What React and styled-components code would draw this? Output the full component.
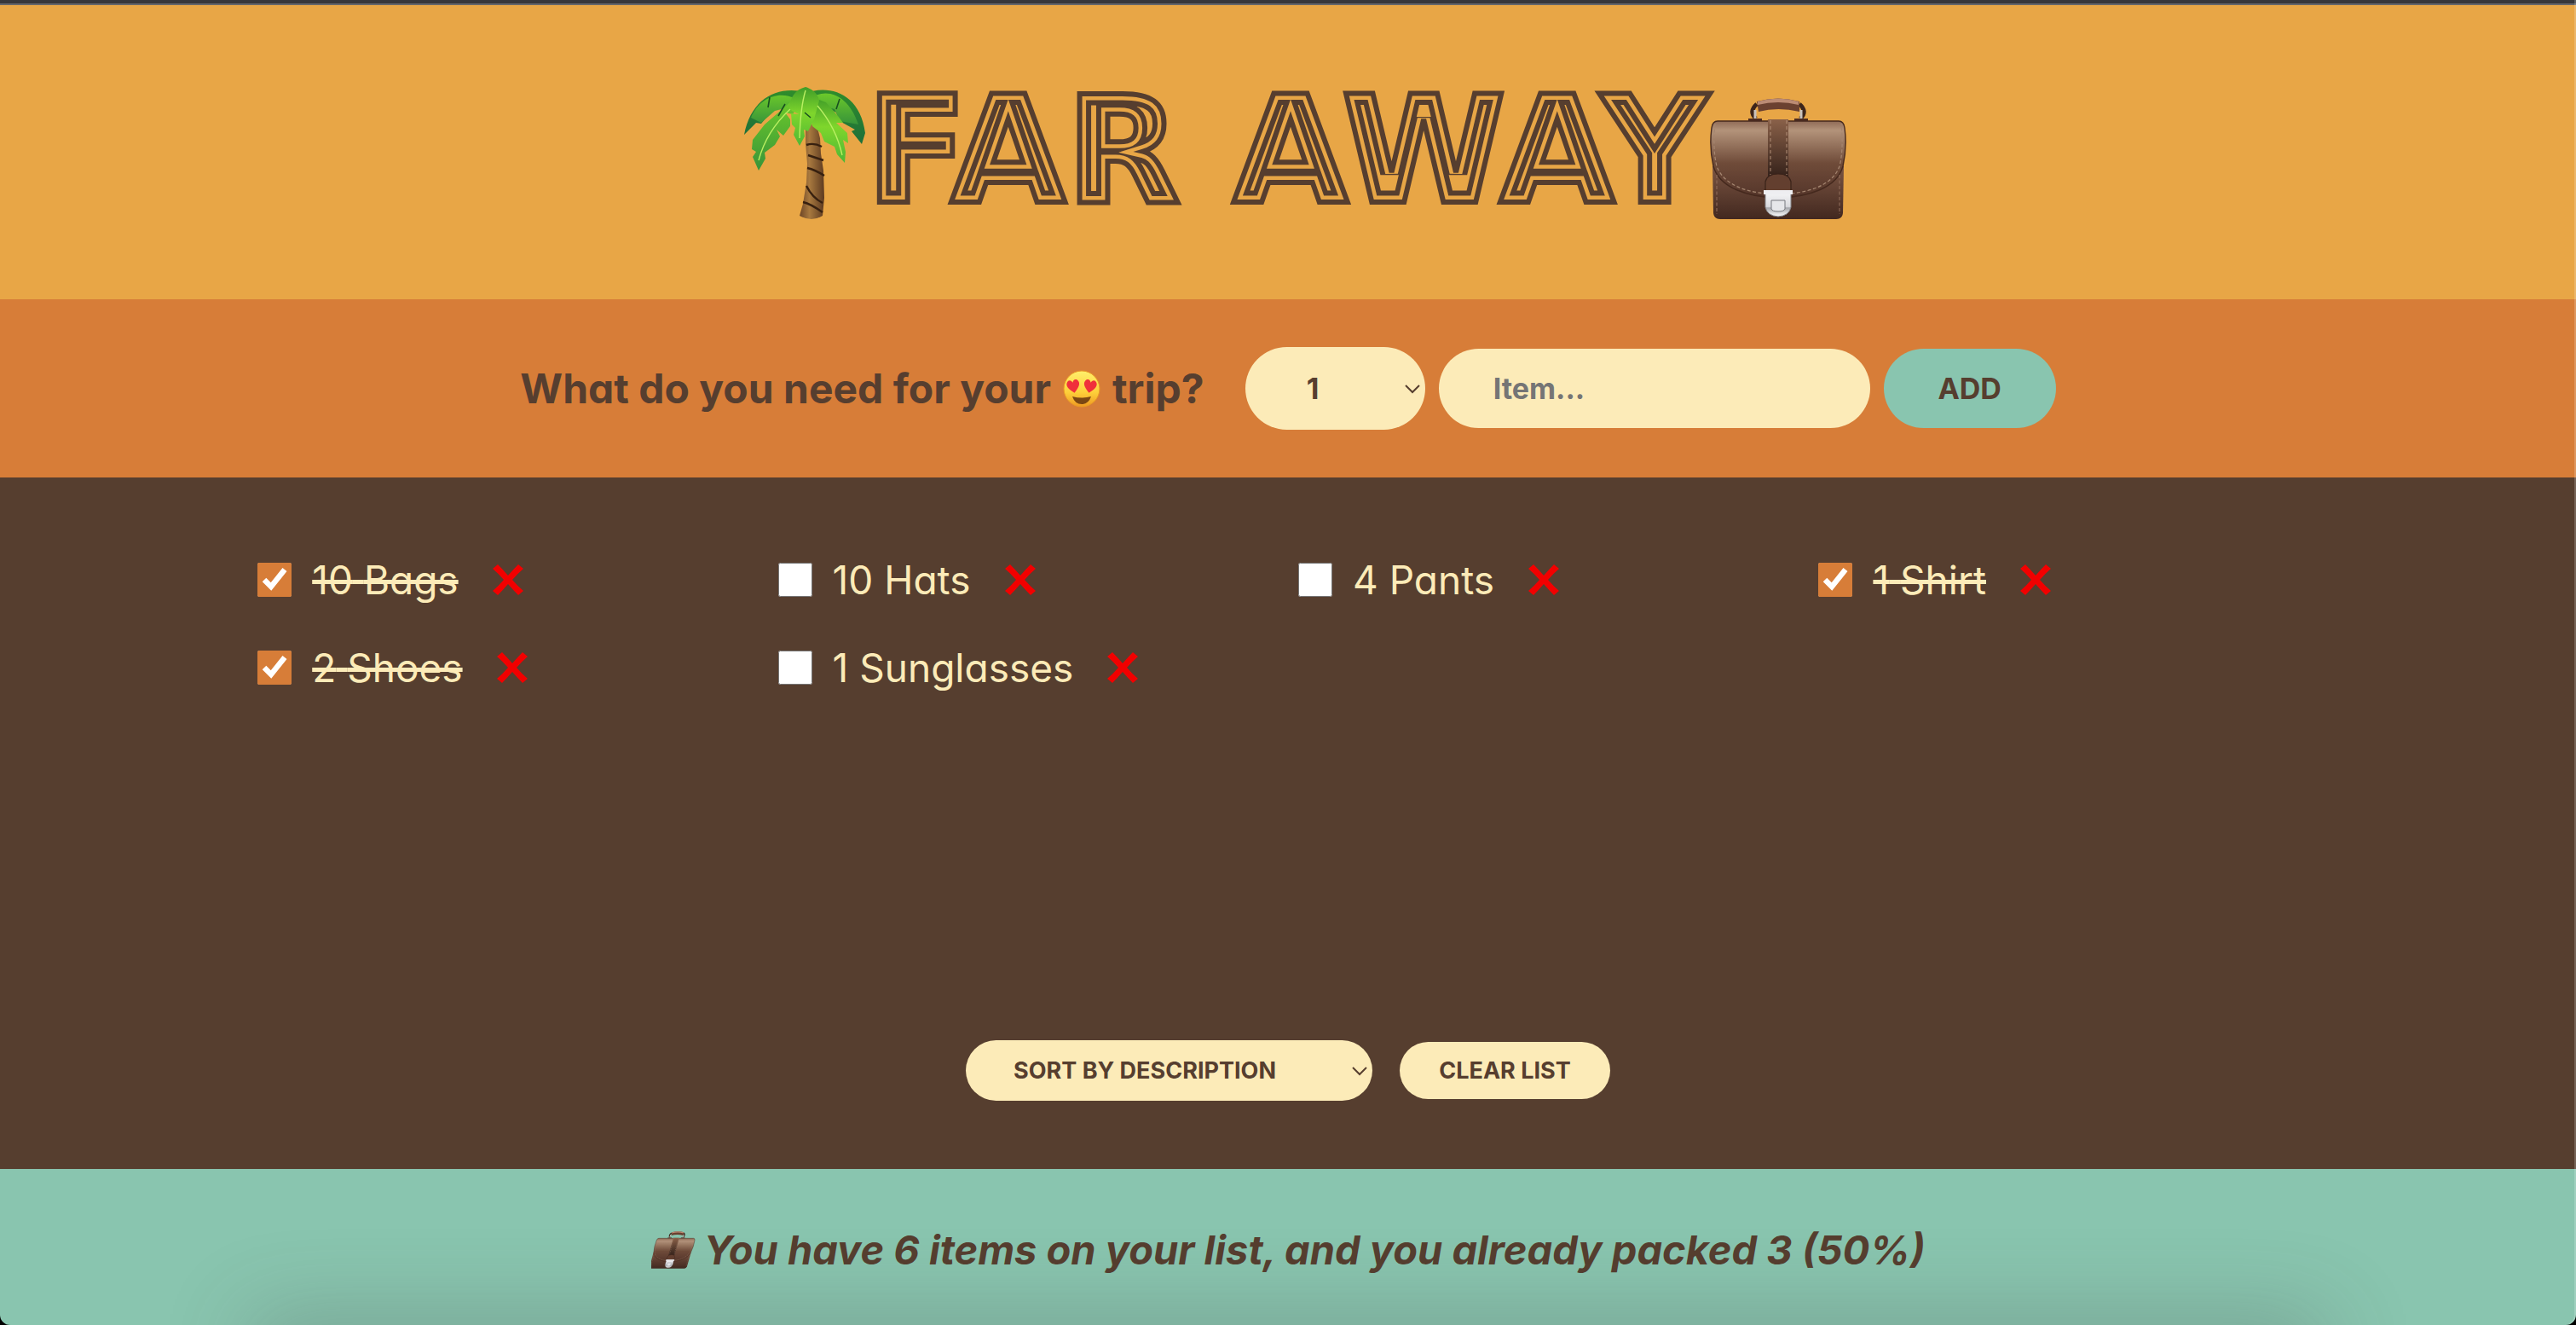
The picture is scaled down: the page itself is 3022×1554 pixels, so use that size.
import React, { useState } from "react";
import styled, { createGlobalStyle } from "styled-components";

const c = {
  amber: "#e8a646",
  orange: "#d77d38",
  brown: "#563e2f",
  cream: "#fcebb8",
  green: "#89c5af",
};

const Global = createGlobalStyle`
  * { box-sizing: border-box; margin: 0; padding: 0; }
  html { background: #000; }
  body {
    color: ${c.brown};
    font-family: Inter, Lato, sans-serif;
    font-feature-settings: "cv11";
    font-size: 46px;
  }
  button, input, select {
    font-family: inherit;
    font-feature-settings: inherit;
    font-weight: 700;
    color: ${c.brown};
    border: none;
  }
`;

const Page = styled.div`
  position: relative;
  min-height: 100vh;
  display: grid;
  grid-template-rows: auto auto auto 1fr auto;
  border-radius: 0 0 12px 12px;
  overflow: hidden;
  &::after {
    content: "";
    position: absolute;
    inset: 0;
    border-radius: inherit;
    box-shadow: inset -2px 0 0 rgba(255, 255, 255, 0.2);
    pointer-events: none;
  }
`;
const WindowEdge = styled.div`
  height: 6px;
  background: #37373b;
  border-bottom: 2px solid #66666a;
`;
const Header = styled.header`
  background: ${c.amber};
  padding: 96px 0 93px;
`;
const Title = styled.h1`
  display: flex;
  justify-content: center;
  align-items: flex-end;
  svg { display: block; overflow: visible; }
`;
const WordmarkText = styled.text`
  font-family: "DejaVu Sans", sans-serif;
  font-weight: 700;
  font-size: 175px;
`;
const Form = styled.form`
  background: ${c.orange};
  height: 209px;
  display: flex;
  align-items: center;
  justify-content: center;
  gap: 16px;
`;
const Question = styled.h3`
  display: flex;
  align-items: center;
  gap: 14px;
  margin-right: 32px;
  font-size: 48px;
  line-height: 60px;
  font-weight: 700;
`;
const SelectBox = styled.span`
  position: relative;
  display: block;
  width: ${(p) => p.$width}px;
  svg {
    position: absolute;
    right: 6px;
    top: 50%;
    margin-top: -5px;
    pointer-events: none;
  }
`;
const Select = styled.select`
  appearance: none;
  display: block;
  width: 100%;
  background: ${c.cream};
  border-radius: 100px;
  text-transform: uppercase;
  font-size: ${(p) => (p.$small ? 27 : 34)}px;
  line-height: ${(p) => (p.$small ? 39 : 49)}px;
  padding: ${(p) => (p.$small ? "16px 56px" : "24px 72px")};
`;
const TextInput = styled.input`
  width: 506px;
  background: ${c.cream};
  border-radius: 100px;
  font-size: 34px;
  line-height: 45px;
  padding: 24px 64px;
  height: 93px;
  &::placeholder { color: #757575; opacity: 1; }
`;
const Button = styled.button`
  background: ${(p) => (p.$small ? c.cream : c.green)};
  border-radius: 100px;
  text-transform: uppercase;
  font-size: ${(p) => (p.$small ? 27 : 34)}px;
  line-height: ${(p) => (p.$small ? 35 : 45)}px;
  min-width: ${(p) => (p.$small ? 247 : 202)}px;
  padding: ${(p) => (p.$small ? "16px 40px" : "24px 56px")};
`;
const Main = styled.main`
  background: ${c.brown};
  color: ${c.cream};
  display: flex;
  flex-direction: column;
  align-items: center;
  justify-content: space-between;
  gap: 64px;
  padding: 80px 0;
`;
const List = styled.ul`
  list-style: none;
  width: 80%;
  display: grid;
  grid-template-columns: repeat(4, 1fr);
  gap: 24px;
`;
const Item = styled.li`
  display: flex;
  align-items: center;
  height: 79px;
`;
const Check = styled.input`
  width: 40px;
  height: 40px;
  margin-right: 24px;
  accent-color: ${c.orange};
`;
const ItemLabel = styled.label`
  font-weight: 400;
  line-height: 60px;
  text-decoration: ${(p) => (p.$packed ? "line-through 5px" : "none")};
`;
const Remove = styled.button`
  background: none;
  padding: 16px;
  margin-left: 24px;
  cursor: pointer;
  svg { display: block; }
`;
const Actions = styled.div`
  display: flex;
  align-items: center;
  justify-content: center;
  gap: 32px;
`;
const Footer = styled.footer`
  position: relative;
  overflow: hidden;
  background: ${c.green};
  height: 183px;
  display: flex;
  align-items: center;
  justify-content: center;
  gap: 8px;
  font-size: 47px;
  font-weight: 700;
  font-style: italic;
  line-height: 60px;
  padding-top: 6px;
  &::after {
    content: "";
    position: absolute;
    left: 10%;
    right: 10%;
    top: 100%;
    height: 60px;
    box-shadow: 0 0 100px 8px rgba(70, 70, 70, 0.3);
  }
`;

function Wordmark() {
  return (
    <svg width="992" height="156" viewBox="0 0 992 156">
      <clipPath id="letters"><use href="#wordmark" /></clipPath>
      <g clipPath="url(#letters)">
        <g fill={c.amber} stroke={c.brown} strokeWidth="27">
          <WordmarkText id="wordmark" x="495" y="135" textAnchor="middle">FAR AWAY</WordmarkText>
        </g>
        <use href="#wordmark" fill="none" stroke={c.amber} strokeWidth="15" />
      </g>
      <use href="#wordmark" fill="none" stroke={c.brown} strokeWidth="6" />
    </svg>
  );
}

function Palm() {
  return (
    <svg width="158" height="156" viewBox="-16 0 142 156" preserveAspectRatio="xMaxYMax meet" aria-hidden="true">
      <defs>
        <linearGradient id="leafDark" x1="0" y1="0" x2="0" y2="1">
          <stop offset="0" stopColor="#2f8d2b" /><stop offset="1" stopColor="#1e6f3a" />
        </linearGradient>
        <linearGradient id="leafMid" x1="0" y1="0" x2="0" y2="1">
          <stop offset="0" stopColor="#6cc92a" /><stop offset="1" stopColor="#37933a" />
        </linearGradient>
        <linearGradient id="leafLight" x1="0" y1="0" x2="0" y2="1">
          <stop offset="0" stopColor="#3f9c28" /><stop offset=".45" stopColor="#7fd62c" /><stop offset="1" stopColor="#4db735" />
        </linearGradient>
        <linearGradient id="trunk" x1="0" y1="0" x2="1" y2="0">
          <stop offset="0" stopColor="#6d4526" /><stop offset=".4" stopColor="#a8793f" /><stop offset="1" stopColor="#5d3a20" />
        </linearGradient>
      </defs>
      <g transform="translate(-16 0)">
        <path d="M72 44 L85 44 L89 60 L90 78 L93 98 L94 130 L92 151 Q79 159 65 151 L69 137 L73 112 L74 90 L72 66Z" fill="url(#trunk)" />
        <path d="M73 68Q82 65 91 70M75 80Q84 83 93 86M74 95Q83 97 94 104M73 116Q80 130 92 136M69 135Q78 137 92 147" fill="none" stroke="#37200f" strokeWidth="2.4" />
        <path d="M72 6C38 -2 8 14 0 56L14 42L20 43L36 24L62 18Z" fill="url(#leafDark)" />
        <path d="M70 8C98 -4 136 6 142 54L138 67L126 52L130 50L112 40L108 30L88 20Z" fill="url(#leafDark)" />
        <path d="M60 14C42 4 18 12 8 36L20 42L36 28L60 22ZM76 14C96 0 122 8 134 44L112 40L106 26L84 20Z" fill="url(#leafMid)" />
        <path d="M54 18L24 44L10 62L9 73L14 76L10 82L17 98L25 84L24 77L36 68L42 58L38 50L46 57L54 46L54 38L48 30L57 32L66 18Z" fill="url(#leafMid)" />
        <path d="M80 12L96 18L110 34L116 42L108 42L121 54L122 66L116 62L119 76L118 89L109 79L106 70L94 64L90 54L80 46L76 28Z" fill="url(#leafLight)" />
        <path d="M72 0C60 3 54 12 53 24L56 28L64 32L55 31L56 44L60 48L58 56L65 69L71 58L70 50L75 52L82 38L88 16C86 6 78 2 72 0Z" fill="url(#leafLight)" />
        <path d="M72 4Q66 24 65 60M54 26Q26 52 17 86M86 22Q108 48 115 80" fill="none" stroke="#b9ef62" strokeWidth="1.4" />
        <path d="M30 12L28 24M112 14L108 26M71 30L78 36M48 20L40 34" fill="none" stroke="#19501f" strokeWidth="1.6" />
      </g>
    </svg>
  );
}

function Case({ width, height, id, slant }) {
  return (
    <svg width={width} height={height} viewBox="0 0 158 143" preserveAspectRatio="none" aria-hidden="true">
      <defs>
        <linearGradient id={id + "Flap"} x1="0" y1="0" x2="0" y2="1">
          <stop offset="0" stopColor="#8f6a56" /><stop offset=".12" stopColor="#b3937a" /><stop offset=".55" stopColor="#6f4b39" /><stop offset="1" stopColor="#54352a" />
        </linearGradient>
        <linearGradient id={id + "Body"} x1="0" y1="0" x2="0" y2="1">
          <stop offset="0" stopColor="#7b5543" /><stop offset="1" stopColor="#42281f" />
        </linearGradient>
        <linearGradient id={id + "Strap"} x1="0" y1="0" x2="0" y2="1">
          <stop offset="0" stopColor="#8a6149" /><stop offset="1" stopColor="#34211a" />
        </linearGradient>
        <linearGradient id={id + "Lock"} x1="0" y1="0" x2="0" y2="1">
          <stop offset="0" stopColor="#f6f6f8" /><stop offset=".6" stopColor="#d9dade" /><stop offset=".65" stopColor="#a5a7ac" /><stop offset="1" stopColor="#ffffff" />
        </linearGradient>
      </defs>
      <g transform={slant ? "translate(26 0) skewX(-14) scale(.84 1)" : undefined}>
        <path d="M54 7Q44 16 53 24M104 7Q114 16 105 24" fill="none" stroke="#3d251b" strokeWidth="5" />
        <path d="M52 14V25M106 14V25" stroke="#c9c2bd" strokeWidth="3" />
        <path d="M54 4Q79 -3 104 4V16Q79 10 56 16Z" fill="#6b4130" />
        <path d="M55 4Q79 -3 103 4V8Q79 2 55 8Z" fill="#bb8b74" />
        <path d="M44 26H60M98 26H114" stroke="#4d2c21" strokeWidth="4" />
        <path d="M2 80H156L155 135Q154 142 147 142H11Q4 142 3 135Z" fill={`url(#${id}Body)`} />
        <path d="M8 27H150Q156 27 157 35Q160 58 155 80C148 105 116 116 79 117C42 116 10 105 3 80Q-2 58 1 35Q2 27 8 27Z" fill={`url(#${id}Flap)`} stroke="#45291e" strokeWidth="1.4" />
        <path d="M5 30Q2 60 7 80C16 104 46 112 79 113C112 112 142 104 151 80Q156 60 153 30" fill="none" stroke="#a58670" strokeWidth="1.2" strokeDasharray="4 2.5" />
        <path d="M7 90V136M151 90V136" stroke="#8a6755" strokeWidth="1.2" strokeDasharray="4 2.5" />
        <rect x="67" y="25" width="24" height="68" fill={`url(#${id}Strap)`} />
        <path d="M70 26V90M89 26V90" stroke="#b39078" strokeWidth="1" strokeDasharray="4 3" />
        <path d="M64 112V98Q66 89 79 89Q92 89 94 98V112Z" fill="#633f2f" stroke="#3a231a" strokeWidth="1.2" />
        <path d="M64 110H94V128Q92 138 79 139Q66 138 64 128Z" fill={`url(#${id}Lock)`} stroke="#85878c" strokeWidth="1" />
        <rect x="62" y="108" width="34" height="5" fill="#eeeef1" />
        <path d="M71 120H87V130Q86 133 79 133Q72 133 71 130Z" fill="#e6e7ea" stroke="#77797e" strokeWidth="1" />
      </g>
    </svg>
  );
}

function HeartEyes() {
  const heart = "M0 8C-6 3-8-1-6-4C-4-7-1-6 0-3C1-6 4-7 6-4C8-1 6 3 0 8Z";
  return (
    <svg width="44" height="44" viewBox="0 0 44 44" aria-hidden="true">
      <defs>
        <linearGradient id="face" x1="0" y1="0" x2="0" y2="1">
          <stop offset="0" stopColor="#ffef6b" /><stop offset=".6" stopColor="#fdcf3a" /><stop offset="1" stopColor="#ef9a22" />
        </linearGradient>
      </defs>
      <circle cx="22" cy="22" r="21" fill="url(#face)" stroke="#ea9a25" />
      <path d={heart} transform="translate(12 18) rotate(-10) scale(1.1)" fill="#f0303b" />
      <path d={heart} transform="translate(32 18) rotate(10) scale(1.1)" fill="#f0303b" />
      <path d="M11 31Q22 34 33 31Q30 40 22 40Q14 40 11 31Z" fill="#7b4713" />
    </svg>
  );
}

function Cross() {
  return (
    <svg width="36" height="36" viewBox="0 0 36 36" aria-hidden="true">
      <path d="M6 0Q12 6 18 13Q24 6 30 0L36 5Q29 11 23 18Q29 25 36 31L30 36Q24 30 18 23Q12 30 6 36L0 31Q7 25 13 18Q7 11 0 5Z" fill="#f20000" />
    </svg>
  );
}

function Chevron() {
  return (
    <svg width="18" height="11" viewBox="0 0 18 11" aria-hidden="true">
      <path d="M1 1L9 9L17 1" fill="none" stroke={c.brown} strokeWidth="2" />
    </svg>
  );
}

const initial = [
  { id: 1, quantity: 10, name: "Bags", packed: true },
  { id: 2, quantity: 10, name: "Hats", packed: false },
  { id: 3, quantity: 4, name: "Pants", packed: false },
  { id: 4, quantity: 1, name: "Shirt", packed: true },
  { id: 5, quantity: 2, name: "Shoes", packed: true },
  { id: 6, quantity: 1, name: "Sunglasses", packed: false },
];

export default function App() {
  const [items, setItems] = useState(initial);
  const [name, setName] = useState("");
  const [quantity, setQuantity] = useState(1);
  const packed = items.filter((i) => i.packed).length;
  const percent = items.length ? Math.round((packed / items.length) * 100) : 0;

  const add = (e) => {
    e.preventDefault();
    if (!name) return;
    setItems([...items, { id: Date.now(), quantity, name, packed: false }]);
    setName("");
    setQuantity(1);
  };
  const toggle = (id) =>
    setItems(items.map((i) => (i.id === id ? { ...i, packed: !i.packed } : i)));

  return (
    <>
      <Global />
      <Page>
        <WindowEdge />
        <Header>
          <Title>
            <Palm />
            <Wordmark />
            <Case width={158} height={143} id="big" />
          </Title>
        </Header>
        <Form onSubmit={add}>
          <Question>
            <span>What do you need for your</span>
            <HeartEyes />
            <span>trip?</span>
          </Question>
          <SelectBox $width={211}>
            <Select aria-label="Quantity" value={quantity} onChange={(e) => setQuantity(+e.target.value)}>
              {Array.from({ length: 20 }, (_, i) => (
                <option key={i} value={i + 1}>{i + 1}</option>
              ))}
            </Select>
            <Chevron />
          </SelectBox>
          <TextInput aria-label="Item" placeholder="Item..." value={name} onChange={(e) => setName(e.target.value)} />
          <Button>Add</Button>
        </Form>
        <Main>
          <List>
            {items.map((i) => (
              <Item key={i.id}>
                <Check id={`item-${i.id}`} type="checkbox" checked={i.packed} onChange={() => toggle(i.id)} />
                <ItemLabel htmlFor={`item-${i.id}`} $packed={i.packed}>{i.quantity} {i.name}</ItemLabel>
                <Remove aria-label={`Remove ${i.name}`} onClick={() => setItems(items.filter((x) => x.id !== i.id))}>
                  <Cross />
                </Remove>
              </Item>
            ))}
          </List>
          <Actions>
            <SelectBox $width={477}>
              <Select $small aria-label="Sort order" defaultValue="description">
                <option value="input">Sort by input order</option>
                <option value="description">Sort by description</option>
                <option value="packed">Sort by packed status</option>
              </Select>
              <Chevron />
            </SelectBox>
            <Button $small onClick={() => setItems([])}>Clear list</Button>
          </Actions>
        </Main>
        <Footer>
          <Case width={54} height={44} id="small" slant />
          <em>You have {items.length} items on your list, and you already packed {packed} ({percent}%)</em>
        </Footer>
      </Page>
    </>
  );
}
